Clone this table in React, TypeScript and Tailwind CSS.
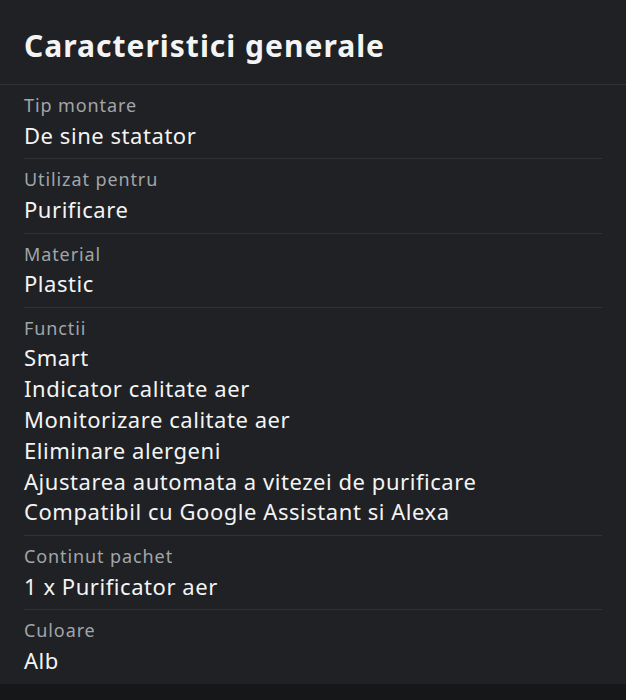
import React from "react";

const rows: { label: string; values: string[] }[] = [
  { label: "Tip montare", values: ["De sine statator"] },
  { label: "Utilizat pentru", values: ["Purificare"] },
  { label: "Material", values: ["Plastic"] },
  {
    label: "Functii",
    values: [
      "Smart",
      "Indicator calitate aer",
      "Monitorizare calitate aer",
      "Eliminare alergeni",
      "Ajustarea automata a vitezei de purificare",
      "Compatibil cu Google Assistant si Alexa",
    ],
  },
  { label: "Continut pachet", values: ["1 x Purificator aer"] },
  { label: "Culoare", values: ["Alb"] },
];

export default function App() {
  return (
    <div
      className="w-[626px] h-[700px] bg-[#161719] overflow-hidden"
      style={{ fontFamily: '"Noto Sans", "Open Sans", sans-serif' }}
    >
      <div className="bg-[#1f2124]">
        <div className="h-[85px] border-b border-[#303236] px-6 flex items-center">
          <h1 className="text-[30px] leading-[40px] font-bold tracking-[1px] text-[#f4f4f4] pt-[8px]">
            Caracteristici generale
          </h1>
        </div>
        <div className="px-6">
          {rows.map((r, i) => (
            <div
              key={r.label}
              className={
                "pt-[7px] pb-[8px] " +
                (i < rows.length - 1 ? "border-b border-[#303236]" : "")
              }
            >
              <div className="text-[18px] leading-[27.5px] tracking-[0.9px] text-[#a2a5a9]">
                {r.label}
              </div>
              {r.values.map((v) => (
                <div
                  key={v}
                  className="text-[22px] leading-[30.8px] tracking-[0.55px] text-[#f4f4f4]"
                >
                  {v}
                </div>
              ))}
            </div>
          ))}
        </div>
      </div>
    </div>
  );
}
